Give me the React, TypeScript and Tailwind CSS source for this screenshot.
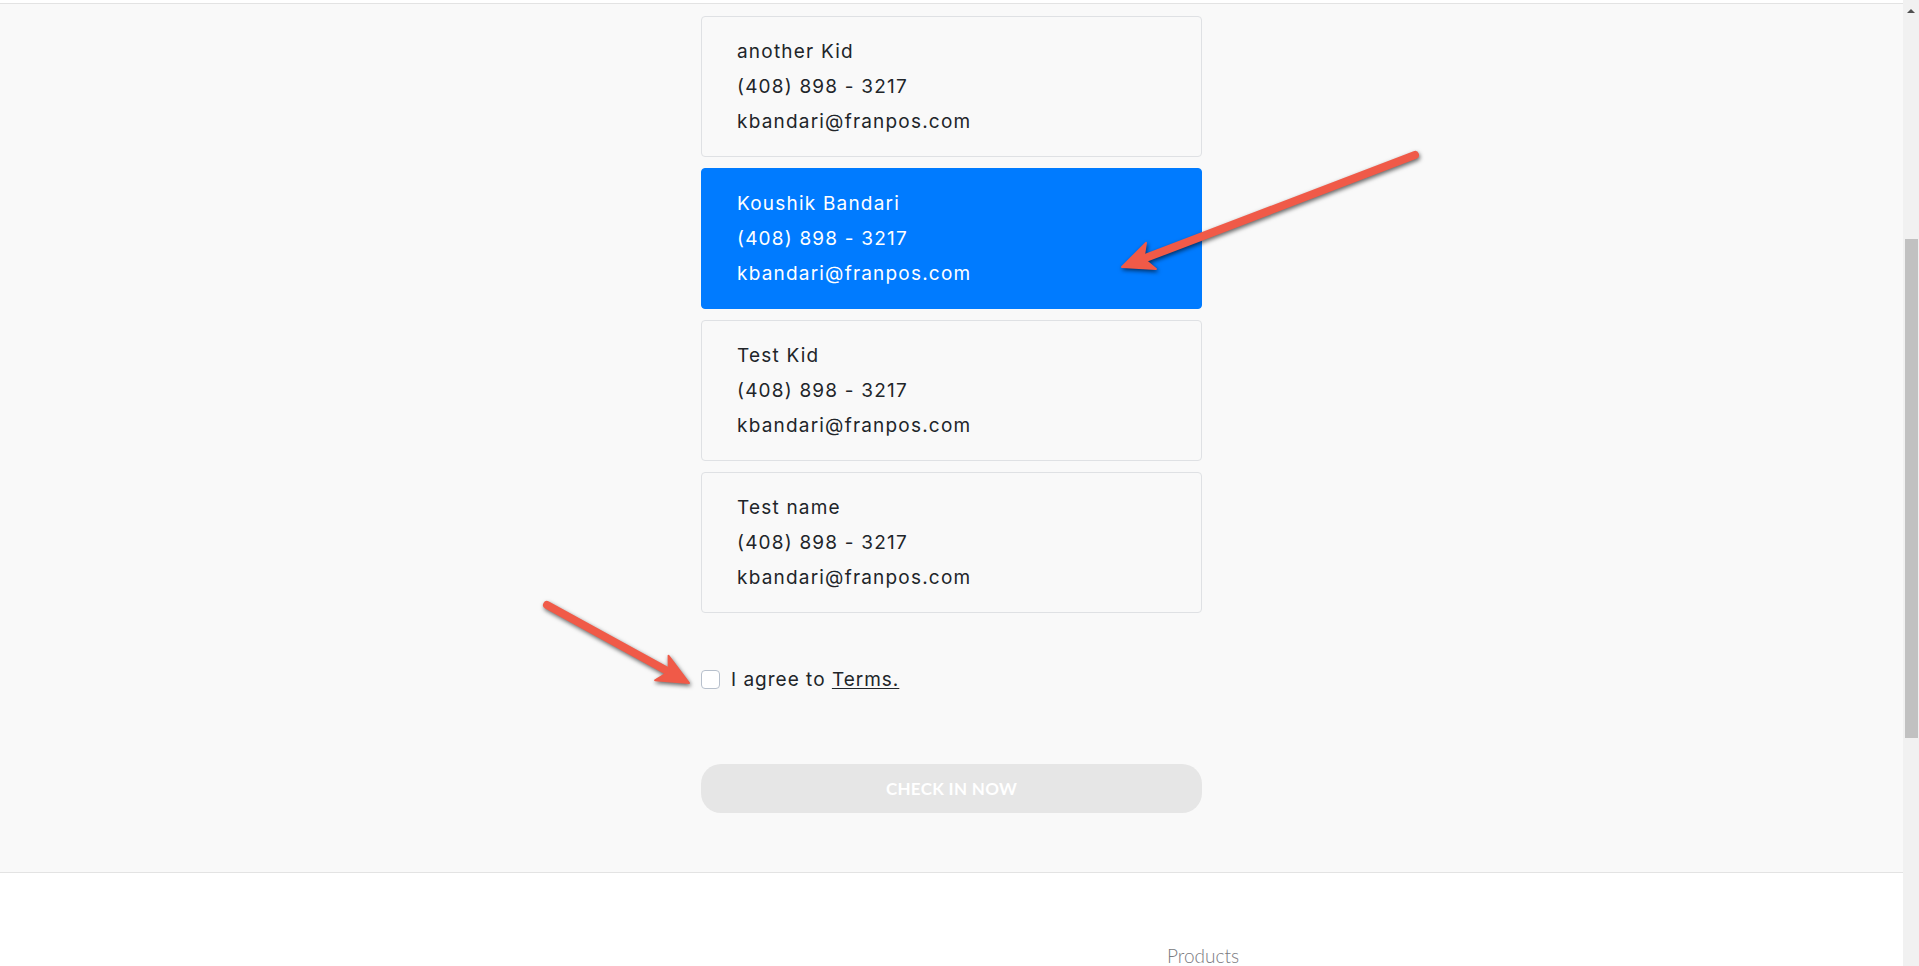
import React from 'react'

// 登録済みの子ども一覧
const kids = [
  { name: 'another Kid', phone: '(408) 898 - 3217', email: 'kbandari@franpos.com' },
  { name: 'Koushik Bandari', phone: '(408) 898 - 3217', email: 'kbandari@franpos.com' },
  { name: 'Test Kid', phone: '(408) 898 - 3217', email: 'kbandari@franpos.com' },
  { name: 'Test name', phone: '(408) 898 - 3217', email: 'kbandari@franpos.com' },
]

const SELECTED = 1

interface ArrowProps {
  from: [number, number]
  to: [number, number]
}

// 注釈の赤い矢印
function Arrow({ from, to }: ArrowProps) {
  const dx = to[0] - from[0]
  const dy = to[1] - from[1]
  const len = Math.sqrt(dx * dx + dy * dy)
  const angle = (Math.atan2(dy, dx) * 180) / Math.PI
  return (
    <g transform={`translate(${to[0]},${to[1]}) rotate(${angle})`}>
      <line
        x1={-len}
        y1={0}
        x2={-18}
        y2={0}
        stroke="#f05a48"
        strokeWidth={8}
        strokeLinecap="round"
      />
      <path
        d="M0 0 L-31 -14 L-23 0 L-31 14 Z"
        fill="#f05a48"
        stroke="#f05a48"
        strokeWidth={2}
        strokeLinejoin="round"
      />
    </g>
  )
}

export default function App() {
  return (
    <div
      className="relative flex h-[966px] w-full overflow-hidden bg-white"
      style={{ fontFamily: 'Inter, "Open Sans", sans-serif' }}
    >
      <div className="flex flex-1 flex-col">
        <div className="h-[3px] shrink-0 bg-white" />
        <main className="flex flex-col items-center border-y border-[#e3e3e3] bg-[#f9f9f9] pt-[12px] pb-[59px]">
          <div className="flex w-[501px] flex-col gap-[11px]">
            {kids.map((kid, i) => {
              const active = i === SELECTED
              return (
                <div
                  key={i}
                  className={
                    active
                      ? 'rounded-[4px] border border-[#007bff] bg-[#007bff] py-[17px] pl-[35px] text-[19px] leading-[35px] tracking-[1.2px] text-white'
                      : 'rounded-[4px] border border-[#dfe1e4] bg-[#f9f9f9] py-[17px] pl-[35px] text-[19px] leading-[35px] tracking-[1.2px] text-[#212529]'
                  }
                >
                  <div>{kid.name}</div>
                  <div>{kid.phone}</div>
                  <div>{kid.email}</div>
                </div>
              )
            })}
          </div>

          <label className="mt-[53px] flex w-[501px] items-center gap-[11px] text-[19px] leading-[27px] tracking-[1px] text-[#212529]">
            <span className="h-[19px] w-[19px] rounded-[4px] border border-[#b7c0cc] bg-white" />
            <span>
              I agree to <span className="underline underline-offset-2">Terms.</span>
            </span>
          </label>

          <button
            className="mt-[71px] h-[49px] w-[501px] rounded-[20px] bg-[#e6e6e6] text-[17px] font-bold tracking-[0.3px] text-white"
            style={{ fontFamily: 'Lato, sans-serif' }}
          >
            CHECK IN NOW
          </button>
        </main>

        <footer className="flex-1 bg-white pt-[71px] pl-[1167px]">
          <span
            className="text-[19px] font-light leading-[24px] text-[#7a7a80]"
            style={{ fontFamily: 'Lato, sans-serif' }}
          >
            Products
          </span>
        </footer>
      </div>

      {/* スクロールバー */}
      <div className="flex w-[16px] flex-col items-center bg-[#f1f1f1]">
        <div className="mt-[9px] h-0 w-0 border-x-[4px] border-b-[4px] border-x-transparent border-b-[#505050]" />
        <div className="mt-[226px] h-[499px] w-[13px] bg-[#c1c1c1]" />
      </div>

      <svg
        className="pointer-events-none absolute top-0 left-0"
        width={1919}
        height={966}
        style={{ filter: 'drop-shadow(1px 2px 2px rgba(0,0,0,0.6))' }}
      >
        <Arrow from={[1415, 155]} to={[1122, 267]} />
        <Arrow from={[547, 605]} to={[689, 683]} />
      </svg>
    </div>
  )
}
